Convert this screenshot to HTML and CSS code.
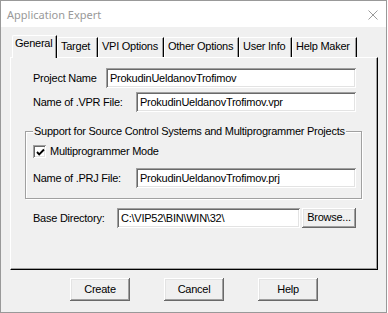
FILE: index.html
```html
<!DOCTYPE html>
<html>
<head>
<meta charset="utf-8">
<link rel="stylesheet" href="styles.css">
</head>
<body>
<div class="win">
  <div class="titlebar">
    <span class="title">Application Expert</span>
    <svg class="close" width="10" height="10" viewBox="0 0 10 10"><path d="M0.5 0.5 L9.5 9.5 M9.5 0.5 L0.5 9.5" stroke="#9a9a9a" stroke-width="1" fill="none"/></svg>
  </div>
  <div class="client">
    <div class="tabs">
      <div class="tab tab-sel w-general">General</div>
      <div class="tab w-target">Target</div>
      <div class="tab w-vpi">VPI Options</div>
      <div class="tab w-other">Other Options</div>
      <div class="tab w-user">User Info</div>
      <div class="tab w-help">Help Maker</div>
    </div>
    <div class="panel">
      <div class="row">
        <span class="label">Project Name</span>
        <div class="field w-250">ProkudinUeldanovTrofimov</div>
      </div>
      <div class="row row-gap">
        <span class="label">Name of .VPR File:</span>
        <div class="field w-220">ProkudinUeldanovTrofimov.vpr</div>
      </div>
      <fieldset class="group">
        <legend class="group-title">Support for Source Control Systems and Multiprogrammer Projects</legend>
        <div class="check-row">
          <span class="checkbox"><svg width="9" height="9" viewBox="0 0 9 9"><path d="M1 4 L3.2 6.3 L8 1.5" stroke="#000" stroke-width="1.9" fill="none"/></svg></span>
          <span class="label">Multiprogrammer Mode</span>
        </div>
        <div class="row-in">
          <span class="label">Name of .PRJ File:</span>
          <div class="field w-220">ProkudinUeldanovTrofimov.prj</div>
        </div>
      </fieldset>
      <div class="row row-base">
        <span class="label">Base Directory:</span>
        <div class="field w-183 push-right">C:\VIP52\BIN\WIN\32\</div>
        <div class="btn browse">Browse...</div>
      </div>
    </div>
    <div class="buttons">
      <div class="btn push">Create</div>
      <div class="btn push">Cancel</div>
      <div class="btn push">Help</div>
    </div>
  </div>
</div>
</body>
</html>
```
FILE: styles.css
```css
html, body {
  margin: 0;
  padding: 0;
  background: #ffffff;
}
.win {
  width: 387px;
  height: 313px;
  box-sizing: border-box;
  border: 1px solid #999999;
  display: flex;
  flex-direction: column;
  font-family: "Liberation Sans", Arial, sans-serif;
  font-size: 11px;
  letter-spacing: -0.25px;
  color: #000;
}
.titlebar {
  height: 26px;
  flex: none;
  background: #ffffff;
  display: flex;
  align-items: center;
  padding-left: 6px;
  padding-right: 8px;
}
.title {
  font-family: "Noto Sans", "Open Sans", sans-serif;
  font-size: 11px;
  letter-spacing: 0;
  color: #999999;
  flex: 1;
}
.close {
  display: block;
  margin-top: 1px;
}
.client {
  flex: 1;
  background: #f0f0f0;
  padding: 8px 9px 0 9px;
}
.tabs {
  display: flex;
  align-items: flex-end;
  height: 22px;
  padding-left: 2px;
}
.tab {
  box-sizing: border-box;
  height: 20px;
  padding: 2px 0 0 3px;
  line-height: 13px;
  white-space: nowrap;
  border-top: 1px solid #ffffff;
  border-left: 1px solid #ffffff;
  border-right: 1px solid #000000;
  box-shadow: inset -1px 0 0 #a0a0a0;
  border-top-left-radius: 2px;
}
.tab-sel {
  height: 23px;
  margin-bottom: -1px;
  padding-top: 1px;
  padding-left: 2px;
  background: #f0f0f0;
  position: relative;
  z-index: 1;
}
.w-general { width: 45px; }
.w-target { width: 41px; }
.w-vpi { width: 66px; }
.w-other { width: 75px; }
.w-user { width: 53px; }
.w-help { width: 65px; }
.panel {
  box-sizing: border-box;
  width: 368px;
  height: 213px;
  border: 1px solid;
  border-color: #ffffff #000000 #000000 #ffffff;
  box-shadow: inset -1px -1px 0 #a0a0a0;
  padding: 10px 15px 0 14px;
}
.row {
  display: flex;
  align-items: center;
  justify-content: space-between;
  padding: 0 6px 0 8px;
}
.row-gap { margin-top: 4px; }
.row-base { margin-top: 9px; justify-content: flex-start; }
.row-in {
  display: flex;
  align-items: center;
  justify-content: space-between;
  margin-top: 10px;
}
.label {
  white-space: nowrap;
  line-height: 13px;
}
.field {
  box-sizing: border-box;
  height: 20px;
  line-height: 20px;
  padding: 0 4px;
  background: #ffffff;
  white-space: nowrap;
  overflow: hidden;
  box-shadow: inset 1px 1px 0 #a0a0a0, inset -1px -1px 0 #ffffff, inset 2px 2px 0 #696969, inset -2px -2px 0 #e3e3e3;
}
.w-250 { width: 250px; }
.w-220 { width: 220px; }
.w-183 { width: 183px; }
.push-right { margin-left: auto; }
.group {
  margin: 13px 0 0 0;
  padding: 7px 5px 10px 7px;
  border: 1px solid #a0a0a0;
  box-shadow: inset 1px 1px 0 #ffffff, 1px 1px 0 #ffffff;
  min-width: 0;
}
.group-title {
  padding: 0 1px;
  line-height: 13px;
  background: #f0f0f0;
  white-space: nowrap;
}
.check-row {
  display: flex;
  align-items: center;
  height: 13px;
}
.checkbox {
  box-sizing: border-box;
  width: 13px;
  height: 13px;
  margin-right: 4px;
  background: #ffffff;
  display: flex;
  align-items: center;
  justify-content: center;
  padding: 1px 0 0 1px;
  box-shadow: inset 1px 1px 0 #a0a0a0, inset -1px -1px 0 #ffffff, inset 2px 2px 0 #696969, inset -2px -2px 0 #e3e3e3;
}
.checkbox svg { display: block; }
.btn {
  box-sizing: border-box;
  background: #f0f0f0;
  text-align: center;
  white-space: nowrap;
  box-shadow: inset -1px -1px 0 #696969, inset 1px 1px 0 #ffffff, inset -2px -2px 0 #a0a0a0, inset 2px 2px 0 #e3e3e3;
}
.browse {
  width: 54px;
  height: 20px;
  line-height: 19px;
  margin-left: 2px;
}
.buttons {
  display: flex;
  gap: 34px;
  margin-top: 8px;
  padding-left: 60px;
}
.push {
  width: 60px;
  height: 23px;
  line-height: 22px;
}
```
